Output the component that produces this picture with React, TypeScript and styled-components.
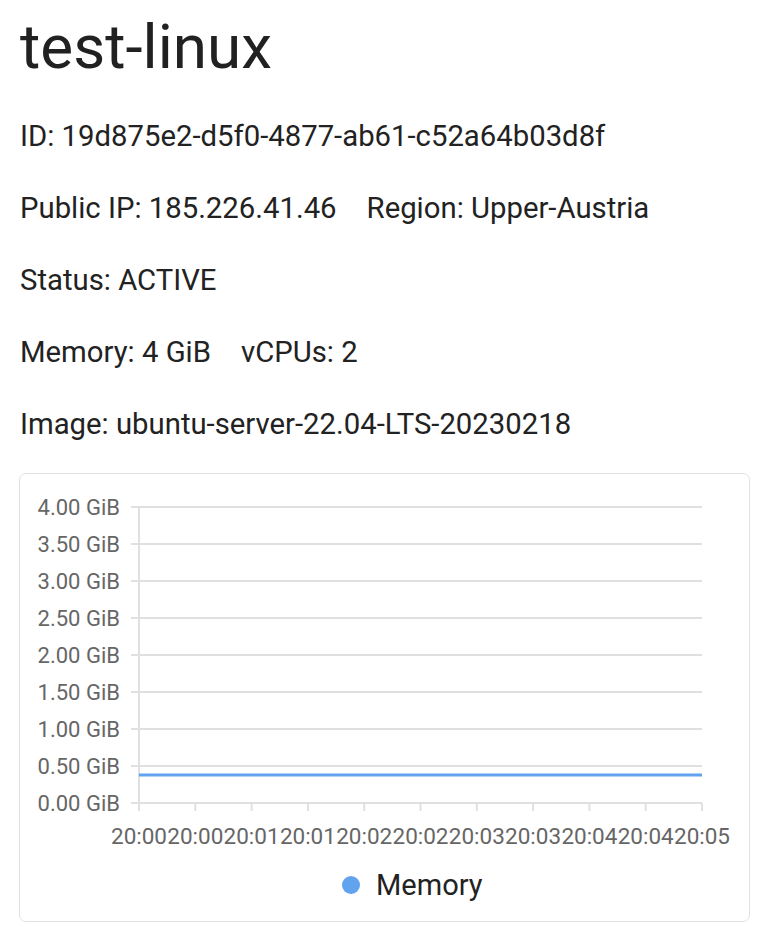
import styled, { createGlobalStyle } from 'styled-components'

const GlobalStyle = createGlobalStyle`
  body {
    margin: 0;
    background: #fff;
    font-family: Roboto, "Liberation Sans", sans-serif;
    color: #212121;
  }
`

const Page = styled.div`
  padding: 11px 19px 20px 20px;
`

const Title = styled.h1`
  margin: 0 0 35px 0;
  font-size: 62px;
  line-height: 72px;
  font-weight: 400;
  color: #212121;
`

const Details = styled.div`
  display: flex;
  flex-direction: column;
  gap: 36px;
`

const Row = styled.div`
  display: flex;
  gap: 30px;
  font-size: 29.3px;
  line-height: 36px;
  color: #222;
  white-space: nowrap;
`

const Card = styled.div`
  margin: 31px 0 0 -1px;
  width: 729px;
  height: 447px;
  border: 1px solid #e2e2e2;
  border-radius: 7px;
`

const yLabels = ['4.00', '3.50', '3.00', '2.50', '2.00', '1.50', '1.00', '0.50', '0.00']
const xLabels = ['20:00', '20:00', '20:01', '20:01', '20:02', '20:02', '20:03', '20:03', '20:04', '20:04', '20:05']

const plotLeft = 119
const plotRight = 682
const plotTop = 33
const step = 37
const plotBottom = plotTop + step * 8

function MemoryChart() {
  const xStep = (plotRight - plotLeft) / 10
  return (
    <svg width="729" height="447" viewBox="0 0 729 447">
      {yLabels.map((v, i) => (
        <g key={i}>
          <line x1={111} x2={plotRight} y1={plotTop + i * step} y2={plotTop + i * step} stroke="#e0e0e0" strokeWidth="2" />
          <text
            x={100}
            y={plotTop + i * step}
            textAnchor="end"
            dominantBaseline="central"
            fontSize="22"
            fill="#666"
            fontFamily="Roboto, sans-serif"
          >
            {v} GiB
          </text>
        </g>
      ))}
      {xLabels.map((t, i) => (
        <g key={i}>
          <line x1={plotLeft + i * xStep} x2={plotLeft + i * xStep} y1={plotBottom} y2={plotBottom + 8} stroke="#e0e0e0" strokeWidth="2" />
          <text
            x={plotLeft + i * xStep}
            y={362}
            textAnchor="middle"
            dominantBaseline="central"
            fontSize="22.5"
            fill="#666"
            fontFamily="Roboto, sans-serif"
          >
            {t}
          </text>
        </g>
      ))}
      <line x1={plotLeft} x2={plotLeft} y1={plotTop} y2={plotBottom + 8} stroke="#e0e0e0" strokeWidth="2" />
      <line x1={plotLeft} x2={plotRight} y1={301} y2={301} stroke="#62a3f0" strokeWidth="3" />
      <circle cx={331} cy={411} r={9} fill="#62a3f0" />
      <text x={356} y={411} dominantBaseline="central" fontSize="29" fill="#222" fontFamily="Roboto, sans-serif">
        Memory
      </text>
    </svg>
  )
}

function App() {
  return (
    <Page>
      <GlobalStyle />
      <Title>test-linux</Title>
      <Details>
        <Row>ID: 19d875e2-d5f0-4877-ab61-c52a64b03d8f</Row>
        <Row>
          <span>Public IP: 185.226.41.46</span>
          <span>Region: Upper-Austria</span>
        </Row>
        <Row>Status: ACTIVE</Row>
        <Row>
          <span>Memory: 4 GiB</span>
          <span>vCPUs: 2</span>
        </Row>
        <Row>Image: ubuntu-server-22.04-LTS-20230218</Row>
      </Details>
      <Card>
        <MemoryChart />
      </Card>
    </Page>
  )
}

export default App
